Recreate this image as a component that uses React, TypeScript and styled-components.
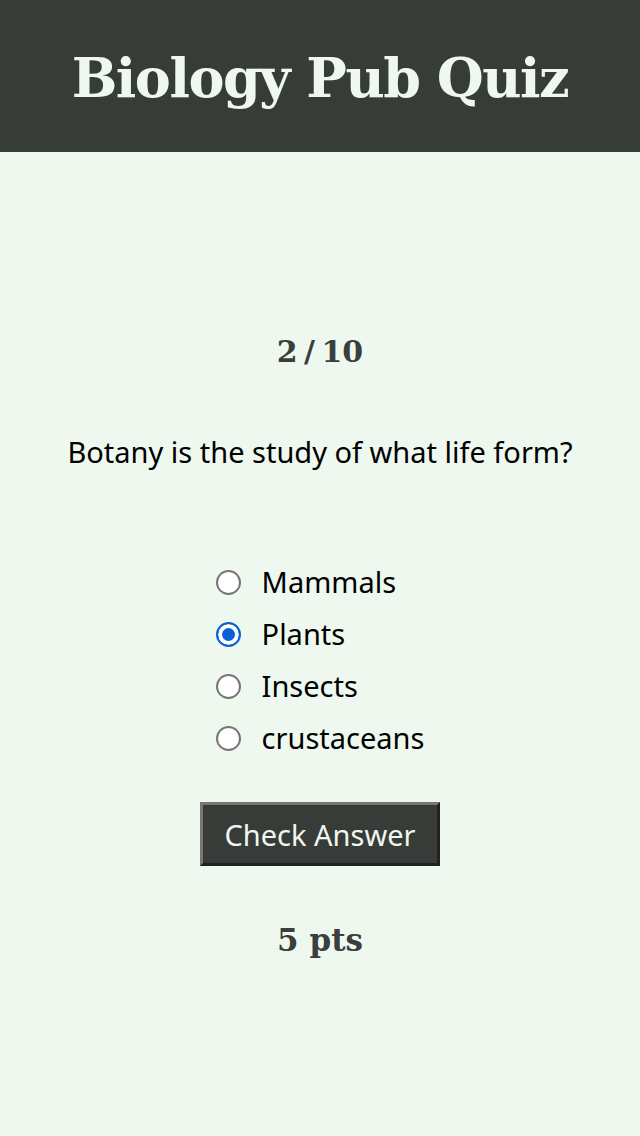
import { useState } from 'react'
import styled, { createGlobalStyle } from 'styled-components'

const colors = {
  dark: '#383c39',
  light: '#eef8ef',
  text: '#000000',
  muted: '#3a3f3c',
  accent: '#0b5fd6',
}

const GlobalStyle = createGlobalStyle`
  html, body {
    margin: 0;
    padding: 0;
    background-color: ${colors.light};
  }
  body {
    font-family: 'Noto Sans', 'Open Sans', sans-serif;
  }
`

const Header = styled.header`
  background-color: ${colors.dark};
  height: 152px;
  display: flex;
  align-items: center;
  justify-content: center;
`
const Title = styled.h1`
  margin: 4px 0 0;
  color: ${colors.light};
  font-family: 'DejaVu Serif', 'Liberation Serif', serif;
  font-weight: bold;
  font-size: 54px;
  letter-spacing: -1.5px;
`
const Main = styled.main`
  display: flex;
  flex-direction: column;
  align-items: center;
  padding-top: 180px;
`
const Counter = styled.div`
  font-family: 'DejaVu Serif', 'Liberation Serif', serif;
  font-weight: bold;
  font-size: 30px;
  color: ${colors.muted};
  line-height: 40px;
  word-spacing: -4px;
`
const Question = styled.p`
  margin: 60px 0 0;
  font-size: 29px;
  line-height: 40px;
  color: ${colors.text};
`
const Options = styled.form`
  margin-top: 92px;
  display: flex;
  flex-direction: column;
  gap: 16px;
  align-self: center;
`
const Option = styled.label`
  display: flex;
  align-items: center;
  gap: 21px;
  font-size: 29px;
  line-height: 36px;
  color: ${colors.text};
  cursor: pointer;
`
const Radio = styled.input`
  appearance: none;
  box-sizing: border-box;
  width: 25px;
  height: 25px;
  margin: 0;
  border: 2px solid #767676;
  border-radius: 50%;
  background-color: #ffffff;
  cursor: pointer;

  &:checked {
    border-color: ${colors.accent};
    background-color: ${colors.accent};
    box-shadow: inset 0 0 0 4px #ffffff;
  }
`
const Button = styled.button`
  margin-top: 46px;
  width: 240px;
  height: 64px;
  background-color: ${colors.dark};
  color: ${colors.light};
  font-family: 'Noto Sans', 'Open Sans', sans-serif;
  font-size: 29px;
  border: 3px outset #767676;
  padding: 0;
  cursor: pointer;
`
const Points = styled.div`
  margin-top: 56px;
  font-family: 'DejaVu Serif', 'Liberation Serif', serif;
  font-weight: bold;
  font-size: 31px;
  color: ${colors.muted};
`

const answers = ['Mammals', 'Plants', 'Insects', 'crustaceans']

const App = () => {
  const [picked, setPicked] = useState<string>('Plants')
  return (
    <>
      <GlobalStyle />
      <Header>
        <Title>Biology Pub Quiz</Title>
      </Header>
      <Main>
        <Counter>2 / 10</Counter>
        <Question>Botany is the study of what life form?</Question>
        <Options>
          {answers.map(a => (
            <Option key={a}>
              <Radio
                type="radio"
                name="answer"
                checked={picked === a}
                onChange={() => setPicked(a)}
              />
              {a}
            </Option>
          ))}
        </Options>
        <Button type="button">Check Answer</Button>
        <Points>5 pts</Points>
      </Main>
    </>
  )
}

export default App
